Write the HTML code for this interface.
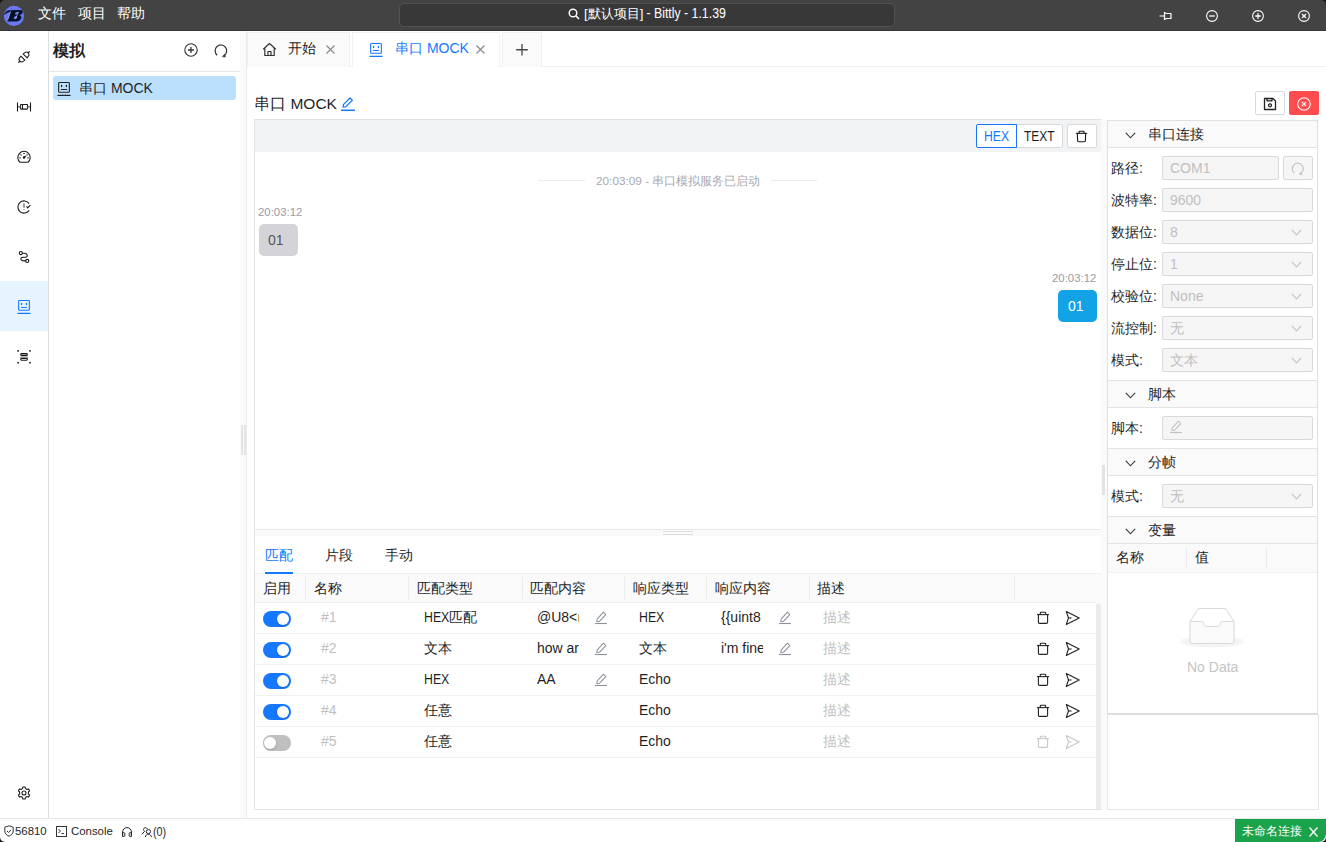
<!DOCTYPE html>
<html><head><meta charset="utf-8">
<style>
*{box-sizing:border-box;margin:0;padding:0}
html,body{width:1326px;height:842px;overflow:hidden;background:#fff;font-family:"Liberation Sans",sans-serif;color:#1f1f1f;font-size:14px}
.a{position:absolute;white-space:nowrap}
svg{position:absolute;overflow:visible}
/* title bar */
#tb{left:0;top:0;width:1326px;height:31px;background:#434343;border-bottom:1px solid #363636}
.menu{color:#fff;font-size:14px;top:5px}
#search{left:399px;top:3px;width:496px;height:24px;background:#383838;border:1px solid #525252;border-radius:5px}
/* icon bar */
#ib{left:0;top:31px;width:49px;height:787px;border-right:1px solid #dcdee3;background:#fff}
#ibact{left:0;top:281px;width:48px;height:50px;background:#e6f4ff}
/* sidebar */
#sb{left:49px;top:31px;width:191px;height:787px;background:#fff}
#split1{left:240px;top:31px;width:7px;height:787px;background:#fafafa;border-right:1px solid #ebebeb}
/* tabs */
.tab{top:32px;height:35px;background:#fafafa;border:1px solid #f0f0f0;border-bottom:none}
#tabline{left:247px;top:66px;width:1079px;height:1px;background:#f0f0f0}
/* main */
#box{left:254px;top:119px;width:848px;height:691px;border:1px solid #e1e2e6;border-right:none}
#chatbar{left:255px;top:120px;width:846px;height:32px;background:#f2f3f5}
#split2{left:1101px;top:119px;width:6px;height:691px;background:#fafafa}
#rp{left:1107px;top:119px;width:212px;height:596px;border:1px solid #e3e3e3;border-top:1px solid #e3e3e3}
.sech{left:1108px;width:209px;height:28px;background:#fafafa;border-bottom:1px solid #e6e6e6}
.lbl{left:1111px;font-size:14px;color:#1f1f1f}
.inp{left:1162px;width:151px;height:24px;background:#f5f5f5;border:1px solid #d9d9d9;border-radius:2px}
.ph{color:#bfbfbf;font-size:14px}
.sb{font-size:12px}
</style></head><body>

<!-- Title bar -->
<div class="a" id="tb"></div>
<svg style="left:0;top:0" width="30" height="30" viewBox="0 0 30 30"><circle cx="13.9" cy="15.9" r="10.1" fill="#6b78f5"/><path d="M4.2 14.4C3.9 12.2 6 10.4 9.2 10.2L19.8 10C22.6 10 23.5 11.4 22.3 13.3 21.6 14.4 20.4 15 19.3 15.3 21.1 15.8 21.9 17 21.1 18.8 20.1 20.8 17.6 21.6 14.6 21.6H7.3L10.3 12.1C8.4 12.2 7 12.9 6 14Z" fill="#06122c"/><path d="M15.6 12.2L17.8 12.1C18.6 12.2 18.3 13.6 17.2 14.3 16.6 14.7 15.5 14.6 15 14.6ZM14.5 16.3L16.6 16.3C17.5 16.5 17.1 18.3 15.8 18.9 15.2 19.2 14.2 19.1 13.6 19.1Z" fill="#6b78f5"/><path d="M10.7 11.2L7.9 19.6M5 13.5C4.9 12.6 5.4 11.8 6.5 11.3M18.6 11.8L15.6 18.6" stroke="#fff" stroke-width="0.55" fill="none" opacity="0.85"/></svg>
<div class="a menu" style="left:38px">文件</div>
<div class="a menu" style="left:78px">项目</div>
<div class="a menu" style="left:117px">帮助</div>
<div class="a" id="search"></div>
<svg style="left:568px;top:8px" width="12" height="12" viewBox="0 0 12 12"><circle cx="5" cy="5" r="3.8" fill="none" stroke="#fff" stroke-width="1.4"/><path d="M7.8 7.8L11 11" stroke="#fff" stroke-width="1.6"/></svg>
<div class="a" style="left:584px;top:5px;color:#fff;font-size:13.2px">[默认项目]<span style="display:inline-block;font-size:14px;transform:scaleX(0.88);transform-origin:0 50%">&nbsp;- Bittly - 1.1.39</span></div>


<!-- window buttons -->
<svg style="left:1159px;top:10px" width="13" height="12" viewBox="0 0 13 12"><path d="M0.5 6H5.5M5.5 2.5V9.5L7.5 8.5H12V3.5H7.5Z" fill="none" stroke="#fff" stroke-width="1.2" stroke-linejoin="round"/></svg>
<svg style="left:1206px;top:10px" width="12" height="12" viewBox="0 0 12 12"><circle cx="6" cy="6" r="5.4" fill="none" stroke="#fff" stroke-width="1.1"/><path d="M3.3 6H8.7" stroke="#fff" stroke-width="1.3"/></svg>
<svg style="left:1252px;top:10px" width="12" height="12" viewBox="0 0 12 12"><circle cx="6" cy="6" r="5.4" fill="none" stroke="#fff" stroke-width="1.1"/><path d="M3.3 6H8.7M6 3.3V8.7" stroke="#fff" stroke-width="1.3"/></svg>
<svg style="left:1298px;top:10px" width="12" height="12" viewBox="0 0 12 12"><circle cx="6" cy="6" r="5.4" fill="none" stroke="#fff" stroke-width="1.1"/><path d="M4 4L8 8M8 4L4 8" stroke="#fff" stroke-width="1.2"/></svg>

<!-- icon bar -->
<div class="a" id="ib"></div>
<div class="a" id="ibact"></div>
<svg style="left:17px;top:50px" width="14" height="14" viewBox="0 0 14 14" fill="none" stroke="#1a1a1a" stroke-width="1.05" stroke-linejoin="round"><g transform="translate(7 7) rotate(-45)"><path d="M1.6 -2.9V2.9L4.6 2.3C6.2 1.6 6.2 -1.6 4.6 -2.3Z"/><path d="M-1.6 -2.9V2.9L-4.6 2.3C-6.2 1.6 -6.2 -1.6 -4.6 -2.3Z"/><path d="M5.9 0H8M-5.9 0H-8" stroke-width="1.3"/></g></svg>
<svg style="left:17px;top:100px" width="14" height="14" viewBox="0 0 14 14" fill="none" stroke="#1a1a1a" stroke-width="1.1"><path d="M0.5 2.4V11.5M13.5 2.4V11.5"/><rect x="3.5" y="4.5" width="7" height="4.6" rx="0.6"/><path d="M5.5 4.5V9.1"/><path d="M1 6.8H3.5M10.5 6.8H13" stroke="#777" stroke-width="1.4"/></svg>
<svg style="left:17px;top:150px" width="14" height="14" viewBox="0 0 14 14" fill="none" stroke="#1a1a1a" stroke-width="1.1"><path d="M3.1 12.3A6.2 6.2 0 1 1 10.9 12.3Z" stroke-linejoin="round"/><path d="M7 7.5L8.8 5.9" stroke-width="1.2"/><circle cx="7" cy="7.6" r="0.7" fill="#1a1a1a"/><g stroke-width="1.2" stroke-linecap="round"><path d="M6.7 3.5H7.3M3.8 4.8L4.1 5M10.2 4.8L9.9 5M2.8 7.8H3.2M10.8 7.8H11.2"/></g></svg>
<svg style="left:17px;top:200px" width="14" height="14" viewBox="0 0 14 14" fill="none" stroke="#1a1a1a" stroke-width="1.1"><path d="M12.1 3.6A6.13 6.13 0 1 0 12.1 10.4"/><path d="M7 3.6V7.7M7 9.2V10.1" stroke-width="1.1" stroke="#444"/><path d="M9.5 6.3L10.7 7.9 13.4 5.2"/></svg>
<svg style="left:17px;top:250px" width="14" height="14" viewBox="0 0 14 14" fill="none" stroke="#1a1a1a" stroke-width="1.1"><circle cx="3.85" cy="3.1" r="1.55"/><circle cx="10.2" cy="10.9" r="1.55"/><path d="M5.4 3.3H7.4C9.6 3.4 10.6 5 10.1 6.3 9.8 7 9.1 7.3 8.5 7.3H5.8C4.2 7.3 3.6 8.4 4 9.5 4.4 10.5 5.6 10.9 7 10.9H8.6"/></svg>
<svg style="left:17px;top:299px" width="14" height="16" viewBox="0 0 14 16" fill="none" stroke="#1677ff" stroke-width="1.1"><rect x="1.65" y="1.55" width="10.7" height="9.7" rx="0.8"/><path d="M4.6 4.3V5.6M9.4 4.3V5.6" stroke-width="1.3" stroke-linecap="round"/><path d="M4.4 8.5H9.6" stroke-width="1.2" stroke-linecap="round"/><path d="M1 14.4H13" stroke-width="1.3" stroke-linecap="round"/></svg>
<svg style="left:17px;top:350px" width="14" height="14" viewBox="0 0 14 14" fill="none" stroke="#1a1a1a" stroke-width="1.1"><g fill="#1a1a1a" stroke="none"><rect x="0.3" y="0.1" width="1.6" height="1.6"/><rect x="12.2" y="0.1" width="1.6" height="1.6"/><rect x="0.3" y="11.9" width="1.6" height="1.6"/><rect x="12.2" y="11.9" width="1.6" height="1.6"/></g><rect x="3.2" y="5.8" width="7.7" height="2.1" fill="#bbb" stroke="none"/><rect x="3.7" y="3.6" width="6.7" height="1.8" rx="0.9"/><rect x="3.7" y="8.4" width="6.7" height="1.8" rx="0.9"/></svg>
<svg style="left:17px;top:786px" width="14" height="14" viewBox="0 0 14 14" fill="none" stroke="#222" stroke-width="1.1"><path d="M5.9 1H8.1L8.5 2.6 9.9 3.4 11.5 2.9 12.6 4.8 11.4 6V8L12.6 9.2 11.5 11.1 9.9 10.6 8.5 11.4 8.1 13H5.9L5.5 11.4 4.1 10.6 2.5 11.1 1.4 9.2 2.6 8V6L1.4 4.8 2.5 2.9 4.1 3.4 5.5 2.6Z" stroke-linejoin="round"/><circle cx="7" cy="7" r="2"/></svg>

<!-- sidebar -->
<div class="a" style="left:53px;top:41px;font-size:16px;font-weight:bold;color:#1f1f1f">模拟</div>
<svg style="left:184px;top:43px" width="14" height="14" viewBox="0 0 14 14" fill="none" stroke="#333" stroke-width="1.1"><circle cx="7" cy="7" r="6.2"/><path d="M4 7H10M7 4V10" stroke-width="1.3"/></svg>
<svg style="left:214px;top:44px" width="14" height="14" viewBox="0 0 14 14" fill="none" stroke="#333" stroke-width="1.2"><path d="M3.2 11.2A5.8 5.8 0 1 1 9.8 11.8"/><path d="M8.4 12.6L11.3 13 10.9 10.1Z" fill="#333" stroke-width="0.6" stroke-linejoin="round"/></svg>
<div class="a" style="left:49px;top:71px;width:191px;height:1px;background:#e6e6ea"></div>
<div class="a" style="left:53px;top:76px;width:183px;height:24px;background:#bae0fd;border-radius:3px"></div>
<svg style="left:57px;top:81px" width="14" height="16" viewBox="0 0 14 16" fill="none" stroke="#222" stroke-width="1.1"><rect x="1.65" y="1.55" width="10.7" height="9.7" rx="0.8"/><path d="M4.6 4.3V5.6M9.4 4.3V5.6" stroke-width="1.3" stroke-linecap="round"/><path d="M4.4 8.5H9.6" stroke-width="1.2" stroke-linecap="round"/><path d="M1 14.4H13" stroke-width="1.3" stroke-linecap="round"/></svg>
<div class="a" style="left:79px;top:80px;font-size:14px;color:#1f1f1f">串口 MOCK</div>
<div class="a" id="split1"></div>
<div class="a" style="left:241px;top:425px;width:2px;height:30px;background:#e3e3e3"></div>
<div class="a" style="left:244px;top:425px;width:2px;height:30px;background:#e3e3e3"></div>

<!-- tabs -->
<div class="a" id="tabline"></div>
<div class="a tab" style="left:247px;width:103px"></div>
<div class="a" style="left:352px;top:32px;width:148px;height:35px;background:#fff;border:1px solid #f0f0f0;border-bottom:none"></div>
<div class="a tab" style="left:502px;width:40px"></div>
<svg style="left:262px;top:42px" width="15" height="15" viewBox="0 0 15 15" fill="none" stroke="#333" stroke-width="1.2" stroke-linejoin="round"><path d="M1.2 7.2L7.5 1.5 13.8 7.2M2.8 5.8V13.5H12.2V5.8M6 13.5V9.5H9V13.5"/></svg>
<div class="a" style="left:288px;top:40px;font-size:14px;color:#1f1f1f">开始</div>
<svg style="left:326px;top:45px" width="9" height="9" viewBox="0 0 9 9" stroke="#888" stroke-width="1.1"><path d="M0.5 0.5L8.5 8.5M8.5 0.5L0.5 8.5"/></svg>
<svg style="left:369px;top:42px" width="14" height="16" viewBox="0 0 14 16" fill="none" stroke="#1677ff" stroke-width="1.1"><rect x="1.65" y="1.55" width="10.7" height="9.7" rx="0.8"/><path d="M4.6 4.3V5.6M9.4 4.3V5.6" stroke-width="1.3" stroke-linecap="round"/><path d="M4.4 8.5H9.6" stroke-width="1.2" stroke-linecap="round"/><path d="M1 14.4H13" stroke-width="1.3" stroke-linecap="round"/></svg>
<div class="a" style="left:395px;top:40px;font-size:14px;color:#1677ff">串口 MOCK</div>
<svg style="left:476px;top:45px" width="9" height="9" viewBox="0 0 9 9" stroke="#888" stroke-width="1.1"><path d="M0.5 0.5L8.5 8.5M8.5 0.5L0.5 8.5"/></svg>
<svg style="left:515px;top:43px" width="14" height="14" viewBox="0 0 14 14" stroke="#444" stroke-width="1.3"><path d="M7 1V12.5M1.2 6.75H12.8"/></svg>


<!-- title row -->
<div class="a" style="left:254px;top:94px;font-size:16px;color:#1f1f1f">串口 <span style="font-size:15.5px">MOCK</span></div>
<svg style="left:340px;top:96px" width="16" height="16" viewBox="0 0 16 16" fill="none" stroke="#1677ff" stroke-width="1.3" stroke-linejoin="round"><path d="M3.2 11.2L3.4 8.6 10 2 12.3 4.3 5.7 10.9Z"/><path d="M1 14.3H15" stroke-width="1.5"/></svg>
<div class="a" style="left:1255px;top:91px;width:30px;height:24px;border:1px solid #d9d9d9;border-radius:2px;background:#fff;box-shadow:0 2px 0 rgba(0,0,0,0.02)"></div>
<svg style="left:1263px;top:97px" width="14" height="14" viewBox="0 0 14 14" fill="none" stroke="#222" stroke-width="1.3" stroke-linejoin="round"><path d="M1.5 1.5H10L12.5 4V12.5H1.5Z"/><path d="M4 1.5V3.8H9V1.5"/><circle cx="7" cy="8.3" r="1.5"/></svg>
<div class="a" style="left:1289px;top:91px;width:30px;height:24px;border-radius:2px;background:#ff4d4f"></div>
<svg style="left:1297px;top:97px" width="14" height="14" viewBox="0 0 14 14" fill="none" stroke="#fff" stroke-width="1.1"><circle cx="7" cy="7" r="6.3"/><path d="M4.8 4.8L9.2 9.2M9.2 4.8L4.8 9.2" stroke-width="1.2"/></svg>

<!-- chat box -->
<div class="a" id="box"></div>
<div class="a" id="chatbar"></div>
<div class="a" style="left:976px;top:124px;width:87px;height:24px;border:1px solid #d9d9d9;border-radius:2px;background:#fff"></div>
<div class="a" style="left:976px;top:124px;width:41px;height:24px;border:1px solid #1677ff;border-radius:2px 0 0 2px;background:#fff"></div>
<div class="a" style="left:984px;top:128px;font-size:14px;color:#1677ff;transform:scaleX(0.87);transform-origin:0 0">HEX</div>
<div class="a" style="left:1024px;top:128px;font-size:14px;color:#1f1f1f;transform:scaleX(0.85);transform-origin:0 0">TEXT</div>
<div class="a" style="left:1067px;top:124px;width:30px;height:24px;border:1px solid #d9d9d9;border-radius:2px;background:#fff"></div>
<svg style="left:1075px;top:130px" width="13" height="13" viewBox="0 0 14 14" fill="none" stroke="#1a1a1a" stroke-width="1.2" stroke-linejoin="round"><path d="M1 3.6H13"/><path d="M4.3 3.6V2C4.3 1.6 4.6 1.3 5 1.3H9C9.4 1.3 9.7 1.6 9.7 2V3.6"/><path d="M2.5 3.6L2.8 11.3C2.8 12 3.2 12.6 3.9 12.6H10.1C10.8 12.6 11.2 12 11.2 11.3L11.5 3.6"/></svg>

<div class="a" style="left:538px;top:180px;width:47px;height:1px;background:#ebebeb"></div>
<div class="a" style="left:771px;top:180px;width:46px;height:1px;background:#ebebeb"></div>
<div class="a" style="left:596px;top:174px;font-size:11.8px;color:#a8a8b0">20:03:09 - 串口模拟服务已启动</div>
<div class="a" style="left:258px;top:206px;font-size:11.4px;color:#9a9aa6">20:03:12</div>
<div class="a" style="left:259px;top:224px;width:39px;height:32px;border-radius:5px;background:#d4d4d8"></div>
<div class="a" style="left:268px;top:232px;font-size:14px;color:#555">01</div>
<div class="a" style="left:1052px;top:272px;font-size:11.4px;color:#9a9aa6">20:03:12</div>
<div class="a" style="left:1058px;top:290px;width:39px;height:32px;border-radius:5px;background:#12a3e6"></div>
<div class="a" style="left:1068px;top:298px;font-size:14px;color:#fff">01</div>

<!-- splitter between chat and bottom -->
<div class="a" style="left:255px;top:529px;width:846px;height:1px;background:#e6e6ea"></div>
<div class="a" style="left:255px;top:530px;width:846px;height:6px;background:#fafafa"></div>
<div class="a" style="left:663px;top:531px;width:30px;height:1px;background:#dcdcdc"></div>
<div class="a" style="left:663px;top:534px;width:30px;height:1px;background:#dcdcdc"></div>

<!-- bottom tabs -->
<div class="a" style="left:265px;top:547px;font-size:14px;color:#1677ff">匹配</div>
<div class="a" style="left:325px;top:547px;font-size:14px;color:#1f1f1f">片段</div>
<div class="a" style="left:385px;top:547px;font-size:14px;color:#1f1f1f">手动</div>
<div class="a" style="left:255px;top:573px;width:846px;height:1px;background:#f0f0f0"></div>
<div class="a" style="left:265px;top:572px;width:28px;height:2px;background:#1677ff"></div>

<div class="a" style="left:255px;top:574px;width:841px;height:29px;background:#fafafa;border-bottom:1px solid #f0f0f0"></div>
<div class="a" style="left:1096px;top:574px;width:5px;height:29px;background:#fafafa"></div>
<div class="a" style="left:305px;top:577px;width:1px;height:22px;background:#ececec"></div>
<div class="a" style="left:408px;top:577px;width:1px;height:22px;background:#ececec"></div>
<div class="a" style="left:522px;top:577px;width:1px;height:22px;background:#ececec"></div>
<div class="a" style="left:624px;top:577px;width:1px;height:22px;background:#ececec"></div>
<div class="a" style="left:706px;top:577px;width:1px;height:22px;background:#ececec"></div>
<div class="a" style="left:809px;top:577px;width:1px;height:22px;background:#ececec"></div>
<div class="a" style="left:1014px;top:577px;width:1px;height:22px;background:#ececec"></div>
<div class="a" style="left:263px;top:580px;font-size:14px;color:#1f1f1f">启用</div>
<div class="a" style="left:314px;top:580px;font-size:14px;color:#1f1f1f">名称</div>
<div class="a" style="left:417px;top:580px;font-size:14px;color:#1f1f1f">匹配类型</div>
<div class="a" style="left:530px;top:580px;font-size:14px;color:#1f1f1f">匹配内容</div>
<div class="a" style="left:633px;top:580px;font-size:14px;color:#1f1f1f">响应类型</div>
<div class="a" style="left:715px;top:580px;font-size:14px;color:#1f1f1f">响应内容</div>
<div class="a" style="left:817px;top:580px;font-size:14px;color:#1f1f1f">描述</div>
<div class="a" style="left:255px;top:633px;width:841px;height:1px;background:#f0f0f0"></div>
<div class="a" style="left:263px;top:611px;width:28px;height:16px;border-radius:8px;background:#1677ff"></div>
<div class="a" style="left:277px;top:613px;width:12px;height:12px;border-radius:6px;background:#fff;box-shadow:0 1px 2px rgba(0,35,11,0.2)"></div>
<div class="a" style="left:321px;top:609px;font-size:14px;color:#bfbfbf">#1</div>
<div class="a" style="left:424px;top:609px;font-size:14px;color:#1f1f1f"><span style="display:inline-block;width:25px;transform:scaleX(0.88);transform-origin:0 0">HEX</span>匹配</div>
<div class="a" style="left:537px;top:609px;width:42px;overflow:hidden;font-size:14px;color:#1f1f1f">@U8&lt;ı</div>
<svg style="left:590px;top:606px" width="24" height="24" viewBox="0 0 24 24" fill="none" stroke="#8c919c" stroke-width="1.05" stroke-linejoin="round"><path d="M6.8 15.6L7.3 12.8 13.4 6.2 15.8 8.6 9.6 15.2Z"/><path d="M5 17.5H17" stroke-width="1.1"/></svg>
<div class="a" style="left:639px;top:609px;font-size:14px;color:#1f1f1f;transform:scaleX(0.88);transform-origin:0 0">HEX</div>
<div class="a" style="left:721px;top:609px;width:42px;overflow:hidden;font-size:14px;color:#1f1f1f">{{uint8</div>
<svg style="left:774px;top:606px" width="24" height="24" viewBox="0 0 24 24" fill="none" stroke="#8c919c" stroke-width="1.05" stroke-linejoin="round"><path d="M6.8 15.6L7.3 12.8 13.4 6.2 15.8 8.6 9.6 15.2Z"/><path d="M5 17.5H17" stroke-width="1.1"/></svg>
<div class="a" style="left:823px;top:609px;font-size:14px;color:#bfbfbf">描述</div>
<svg style="left:1036px;top:611px" width="14" height="14" viewBox="0 0 14 14" fill="none" stroke="#222" stroke-width="1.1" stroke-linejoin="round"><path d="M1 3.6H13"/><path d="M4.3 3.6V2C4.3 1.6 4.6 1.3 5 1.3H9C9.4 1.3 9.7 1.6 9.7 2V3.6"/><path d="M2.4 3.6V11.3C2.4 12 2.9 12.4 3.5 12.4H10.5C11.1 12.4 11.6 12 11.6 11.3V3.6"/></svg>
<svg style="left:1065px;top:611px" width="15" height="14" viewBox="0 0 15 14" fill="none" stroke="#222" stroke-width="1.1" stroke-linejoin="round"><path d="M1.3 0.6L14.2 7 1.3 13.4 3.5 7Z"/><path d="M3.5 7H6.5"/></svg>
<div class="a" style="left:255px;top:664px;width:841px;height:1px;background:#f0f0f0"></div>
<div class="a" style="left:263px;top:642px;width:28px;height:16px;border-radius:8px;background:#1677ff"></div>
<div class="a" style="left:277px;top:644px;width:12px;height:12px;border-radius:6px;background:#fff;box-shadow:0 1px 2px rgba(0,35,11,0.2)"></div>
<div class="a" style="left:321px;top:640px;font-size:14px;color:#bfbfbf">#2</div>
<div class="a" style="left:424px;top:640px;font-size:14px;color:#1f1f1f">文本</div>
<div class="a" style="left:537px;top:640px;width:42px;overflow:hidden;font-size:14px;color:#1f1f1f">how ar</div>
<svg style="left:590px;top:637px" width="24" height="24" viewBox="0 0 24 24" fill="none" stroke="#8c919c" stroke-width="1.05" stroke-linejoin="round"><path d="M6.8 15.6L7.3 12.8 13.4 6.2 15.8 8.6 9.6 15.2Z"/><path d="M5 17.5H17" stroke-width="1.1"/></svg>
<div class="a" style="left:639px;top:640px;font-size:14px;color:#1f1f1f">文本</div>
<div class="a" style="left:721px;top:640px;width:42px;overflow:hidden;font-size:14px;color:#1f1f1f">i'm fine</div>
<svg style="left:774px;top:637px" width="24" height="24" viewBox="0 0 24 24" fill="none" stroke="#8c919c" stroke-width="1.05" stroke-linejoin="round"><path d="M6.8 15.6L7.3 12.8 13.4 6.2 15.8 8.6 9.6 15.2Z"/><path d="M5 17.5H17" stroke-width="1.1"/></svg>
<div class="a" style="left:823px;top:640px;font-size:14px;color:#bfbfbf">描述</div>
<svg style="left:1036px;top:642px" width="14" height="14" viewBox="0 0 14 14" fill="none" stroke="#222" stroke-width="1.1" stroke-linejoin="round"><path d="M1 3.6H13"/><path d="M4.3 3.6V2C4.3 1.6 4.6 1.3 5 1.3H9C9.4 1.3 9.7 1.6 9.7 2V3.6"/><path d="M2.4 3.6V11.3C2.4 12 2.9 12.4 3.5 12.4H10.5C11.1 12.4 11.6 12 11.6 11.3V3.6"/></svg>
<svg style="left:1065px;top:642px" width="15" height="14" viewBox="0 0 15 14" fill="none" stroke="#222" stroke-width="1.1" stroke-linejoin="round"><path d="M1.3 0.6L14.2 7 1.3 13.4 3.5 7Z"/><path d="M3.5 7H6.5"/></svg>
<div class="a" style="left:255px;top:695px;width:841px;height:1px;background:#f0f0f0"></div>
<div class="a" style="left:263px;top:673px;width:28px;height:16px;border-radius:8px;background:#1677ff"></div>
<div class="a" style="left:277px;top:675px;width:12px;height:12px;border-radius:6px;background:#fff;box-shadow:0 1px 2px rgba(0,35,11,0.2)"></div>
<div class="a" style="left:321px;top:671px;font-size:14px;color:#bfbfbf">#3</div>
<div class="a" style="left:424px;top:671px;font-size:14px;color:#1f1f1f;transform:scaleX(0.88);transform-origin:0 0">HEX</div>
<div class="a" style="left:537px;top:671px;width:42px;overflow:hidden;font-size:14px;color:#1f1f1f">AA</div>
<svg style="left:590px;top:668px" width="24" height="24" viewBox="0 0 24 24" fill="none" stroke="#8c919c" stroke-width="1.05" stroke-linejoin="round"><path d="M6.8 15.6L7.3 12.8 13.4 6.2 15.8 8.6 9.6 15.2Z"/><path d="M5 17.5H17" stroke-width="1.1"/></svg>
<div class="a" style="left:639px;top:671px;font-size:14px;color:#1f1f1f">Echo</div>
<div class="a" style="left:823px;top:671px;font-size:14px;color:#bfbfbf">描述</div>
<svg style="left:1036px;top:673px" width="14" height="14" viewBox="0 0 14 14" fill="none" stroke="#222" stroke-width="1.1" stroke-linejoin="round"><path d="M1 3.6H13"/><path d="M4.3 3.6V2C4.3 1.6 4.6 1.3 5 1.3H9C9.4 1.3 9.7 1.6 9.7 2V3.6"/><path d="M2.4 3.6V11.3C2.4 12 2.9 12.4 3.5 12.4H10.5C11.1 12.4 11.6 12 11.6 11.3V3.6"/></svg>
<svg style="left:1065px;top:673px" width="15" height="14" viewBox="0 0 15 14" fill="none" stroke="#222" stroke-width="1.1" stroke-linejoin="round"><path d="M1.3 0.6L14.2 7 1.3 13.4 3.5 7Z"/><path d="M3.5 7H6.5"/></svg>
<div class="a" style="left:255px;top:726px;width:841px;height:1px;background:#f0f0f0"></div>
<div class="a" style="left:263px;top:704px;width:28px;height:16px;border-radius:8px;background:#1677ff"></div>
<div class="a" style="left:277px;top:706px;width:12px;height:12px;border-radius:6px;background:#fff;box-shadow:0 1px 2px rgba(0,35,11,0.2)"></div>
<div class="a" style="left:321px;top:702px;font-size:14px;color:#bfbfbf">#4</div>
<div class="a" style="left:424px;top:702px;font-size:14px;color:#1f1f1f">任意</div>
<div class="a" style="left:639px;top:702px;font-size:14px;color:#1f1f1f">Echo</div>
<div class="a" style="left:823px;top:702px;font-size:14px;color:#bfbfbf">描述</div>
<svg style="left:1036px;top:704px" width="14" height="14" viewBox="0 0 14 14" fill="none" stroke="#222" stroke-width="1.1" stroke-linejoin="round"><path d="M1 3.6H13"/><path d="M4.3 3.6V2C4.3 1.6 4.6 1.3 5 1.3H9C9.4 1.3 9.7 1.6 9.7 2V3.6"/><path d="M2.4 3.6V11.3C2.4 12 2.9 12.4 3.5 12.4H10.5C11.1 12.4 11.6 12 11.6 11.3V3.6"/></svg>
<svg style="left:1065px;top:704px" width="15" height="14" viewBox="0 0 15 14" fill="none" stroke="#222" stroke-width="1.1" stroke-linejoin="round"><path d="M1.3 0.6L14.2 7 1.3 13.4 3.5 7Z"/><path d="M3.5 7H6.5"/></svg>
<div class="a" style="left:255px;top:757px;width:841px;height:1px;background:#f0f0f0"></div>
<div class="a" style="left:263px;top:735px;width:28px;height:16px;border-radius:8px;background:#bfbfbf"></div>
<div class="a" style="left:264px;top:737px;width:12px;height:12px;border-radius:6px;background:#fff;box-shadow:0 1px 2px rgba(0,35,11,0.2)"></div>
<div class="a" style="left:321px;top:733px;font-size:14px;color:#bfbfbf">#5</div>
<div class="a" style="left:424px;top:733px;font-size:14px;color:#1f1f1f">任意</div>
<div class="a" style="left:639px;top:733px;font-size:14px;color:#1f1f1f">Echo</div>
<div class="a" style="left:823px;top:733px;font-size:14px;color:#bfbfbf">描述</div>
<svg style="left:1036px;top:735px" width="14" height="14" viewBox="0 0 14 14" fill="none" stroke="#c8c8c8" stroke-width="1.1" stroke-linejoin="round"><path d="M1 3.6H13"/><path d="M4.3 3.6V2C4.3 1.6 4.6 1.3 5 1.3H9C9.4 1.3 9.7 1.6 9.7 2V3.6"/><path d="M2.4 3.6V11.3C2.4 12 2.9 12.4 3.5 12.4H10.5C11.1 12.4 11.6 12 11.6 11.3V3.6"/></svg>
<svg style="left:1065px;top:735px" width="15" height="14" viewBox="0 0 15 14" fill="none" stroke="#c8c8c8" stroke-width="1.1" stroke-linejoin="round"><path d="M1.3 0.6L14.2 7 1.3 13.4 3.5 7Z"/><path d="M3.5 7H6.5"/></svg>
<div class="a" style="left:1096px;top:603px;width:5px;height:206px;background:#ebebeb;border-radius:3px 3px 0 0"></div>
<div class="a" id="split2"></div>
<div class="a" style="left:1102px;top:465px;width:3px;height:30px;background:#e3e3e3"></div>
<div class="a" style="left:1107px;top:120px;width:211px;height:595px;border:1px solid #e0e0e0;background:#fff"></div>
<div class="a sech" style="top:121px;height:27px"></div>
<div class="a" style="left:1108px;top:147px;width:209px;height:1px;background:#e3e3e3"></div>
<svg style="left:1125px;top:132px" width="11" height="7" viewBox="0 0 11 7" fill="none" stroke="#333" stroke-width="1.1"><path d="M0.8 0.8L5.5 5.8 10.2 0.8"/></svg>
<div class="a" style="left:1148px;top:126px;font-size:14px;color:#1f1f1f">串口连接</div>
<div class="a sech" style="top:381px;height:27px"></div>
<div class="a" style="left:1108px;top:407px;width:209px;height:1px;background:#e3e3e3"></div>
<svg style="left:1125px;top:392px" width="11" height="7" viewBox="0 0 11 7" fill="none" stroke="#333" stroke-width="1.1"><path d="M0.8 0.8L5.5 5.8 10.2 0.8"/></svg>
<div class="a" style="left:1148px;top:386px;font-size:14px;color:#1f1f1f">脚本</div>
<div class="a sech" style="top:449px;height:27px"></div>
<div class="a" style="left:1108px;top:475px;width:209px;height:1px;background:#e3e3e3"></div>
<svg style="left:1125px;top:460px" width="11" height="7" viewBox="0 0 11 7" fill="none" stroke="#333" stroke-width="1.1"><path d="M0.8 0.8L5.5 5.8 10.2 0.8"/></svg>
<div class="a" style="left:1148px;top:454px;font-size:14px;color:#1f1f1f">分帧</div>
<div class="a sech" style="top:517px;height:27px"></div>
<div class="a" style="left:1108px;top:543px;width:209px;height:1px;background:#e3e3e3"></div>
<svg style="left:1125px;top:528px" width="11" height="7" viewBox="0 0 11 7" fill="none" stroke="#333" stroke-width="1.1"><path d="M0.8 0.8L5.5 5.8 10.2 0.8"/></svg>
<div class="a" style="left:1148px;top:522px;font-size:14px;color:#1f1f1f">变量</div>
<div class="a" style="left:1108px;top:380px;width:209px;height:1px;background:#e3e3e3"></div>
<div class="a" style="left:1108px;top:448px;width:209px;height:1px;background:#e3e3e3"></div>
<div class="a" style="left:1108px;top:516px;width:209px;height:1px;background:#e3e3e3"></div>
<div class="a" style="left:1111px;top:160px;font-size:14px;color:#1f1f1f">路径:</div>
<div class="a inp" style="top:156px;width:117px"></div>
<div class="a" style="left:1170px;top:160px;font-size:14px;color:#bfbfbf">COM1</div>
<div class="a inp" style="left:1283px;top:156px;width:30px"></div>
<svg style="left:1291px;top:162px" width="14" height="14" viewBox="0 0 14 14" fill="none" stroke="#bfbfbf" stroke-width="1.1"><path d="M3.3 11A5.47 5.47 0 1 1 9.5 11.5"/><path d="M8.2 12.3L10.9 12.7 10.5 10Z" fill="#bfbfbf" stroke-width="0.6" stroke-linejoin="round"/></svg>
<div class="a" style="left:1111px;top:192px;font-size:14px;color:#1f1f1f">波特率:</div>
<div class="a inp" style="top:188px;width:151px"></div>
<div class="a" style="left:1170px;top:192px;font-size:14px;color:#bfbfbf">9600</div>
<div class="a" style="left:1111px;top:224px;font-size:14px;color:#1f1f1f">数据位:</div>
<div class="a inp" style="top:220px;width:151px"></div>
<div class="a" style="left:1170px;top:224px;font-size:14px;color:#bfbfbf">8</div>
<svg style="left:1291px;top:229px" width="11" height="7" viewBox="0 0 11 7" fill="none" stroke="#bfbfbf" stroke-width="1.1"><path d="M0.8 0.8L5.5 5.8 10.2 0.8"/></svg>
<div class="a" style="left:1111px;top:256px;font-size:14px;color:#1f1f1f">停止位:</div>
<div class="a inp" style="top:252px;width:151px"></div>
<div class="a" style="left:1170px;top:256px;font-size:14px;color:#bfbfbf">1</div>
<svg style="left:1291px;top:261px" width="11" height="7" viewBox="0 0 11 7" fill="none" stroke="#bfbfbf" stroke-width="1.1"><path d="M0.8 0.8L5.5 5.8 10.2 0.8"/></svg>
<div class="a" style="left:1111px;top:288px;font-size:14px;color:#1f1f1f">校验位:</div>
<div class="a inp" style="top:284px;width:151px"></div>
<div class="a" style="left:1170px;top:288px;font-size:14px;color:#bfbfbf">None</div>
<svg style="left:1291px;top:293px" width="11" height="7" viewBox="0 0 11 7" fill="none" stroke="#bfbfbf" stroke-width="1.1"><path d="M0.8 0.8L5.5 5.8 10.2 0.8"/></svg>
<div class="a" style="left:1111px;top:320px;font-size:14px;color:#1f1f1f">流控制:</div>
<div class="a inp" style="top:316px;width:151px"></div>
<div class="a" style="left:1170px;top:320px;font-size:14px;color:#bfbfbf">无</div>
<svg style="left:1291px;top:325px" width="11" height="7" viewBox="0 0 11 7" fill="none" stroke="#bfbfbf" stroke-width="1.1"><path d="M0.8 0.8L5.5 5.8 10.2 0.8"/></svg>
<div class="a" style="left:1111px;top:352px;font-size:14px;color:#1f1f1f">模式:</div>
<div class="a inp" style="top:348px;width:151px"></div>
<div class="a" style="left:1170px;top:352px;font-size:14px;color:#bfbfbf">文本</div>
<svg style="left:1291px;top:357px" width="11" height="7" viewBox="0 0 11 7" fill="none" stroke="#bfbfbf" stroke-width="1.1"><path d="M0.8 0.8L5.5 5.8 10.2 0.8"/></svg>
<div class="a" style="left:1111px;top:420px;font-size:14px;color:#1f1f1f">脚本:</div>
<div class="a inp" style="top:416px;width:151px"></div>
<svg style="left:1165px;top:415px" width="24" height="24" viewBox="0 0 24 24" fill="none" stroke="#bfbfbf" stroke-width="1.05" stroke-linejoin="round"><path d="M6.8 15.6L7.3 12.8 13.4 6.2 15.8 8.6 9.6 15.2Z"/><path d="M5 17.5H17" stroke-width="1.1"/></svg>
<div class="a" style="left:1111px;top:488px;font-size:14px;color:#1f1f1f">模式:</div>
<div class="a inp" style="top:484px;width:151px"></div>
<div class="a" style="left:1170px;top:488px;font-size:14px;color:#bfbfbf">无</div>
<svg style="left:1291px;top:493px" width="11" height="7" viewBox="0 0 11 7" fill="none" stroke="#bfbfbf" stroke-width="1.1"><path d="M0.8 0.8L5.5 5.8 10.2 0.8"/></svg>
<div class="a" style="left:1108px;top:544px;width:209px;height:29px;background:#fafafa;border-bottom:1px solid #f0f0f0"></div>
<div class="a" style="left:1186px;top:547px;width:1px;height:21px;background:#ececec"></div>
<div class="a" style="left:1266px;top:547px;width:1px;height:21px;background:#ececec"></div>
<div class="a" style="left:1116px;top:549px;font-size:14px;color:#1f1f1f">名称</div>
<div class="a" style="left:1195px;top:549px;font-size:14px;color:#1f1f1f">值</div>
<svg style="left:1180px;top:607px" width="64" height="41" viewBox="0 0 64 41"><ellipse cx="32" cy="34.5" rx="32" ry="6" fill="#f5f5f5"/><path d="M10 14.5L18.5 1.5H45.5L54 14.5" fill="none" stroke="#d9d9d9" stroke-width="1"/><path d="M10 14.5H22C23.5 14.5 24 15.5 24 17 24 18.5 25 19.5 27 19.5H37C39 19.5 40 18.5 40 17 40 15.5 40.5 14.5 42 14.5H54V34C54 35.5 53 36.5 51.5 36.5H12.5C11 36.5 10 35.5 10 34Z" fill="#fafafa" stroke="#d9d9d9" stroke-width="1"/></svg>
<div class="a" style="left:1187px;top:659px;font-size:14px;color:#c4c4c4">No Data</div>
<div class="a" style="left:1107px;top:714px;width:212px;height:96px;border:1px solid #e6e6ea;border-top:none"></div>
<div class="a" style="left:1108px;top:713px;width:209px;height:1px;background:#d9d9d9"></div>
<div class="a" style="left:0;top:818px;width:1326px;height:1px;background:#e6e6ea"></div>
<svg style="left:4px;top:825px" width="10" height="12" viewBox="0 0 10 12" fill="none" stroke="#333" stroke-width="1"><path d="M5 0.8L9.2 2.2V6C9.2 8.6 7.3 10.4 5 11.2 2.7 10.4 0.8 8.6 0.8 6V2.2Z"/><path d="M3 6L4.5 7.5 7 4.8"/></svg>
<div class="a" style="left:15px;top:825px;font-size:11.4px;color:#1f1f1f">56810</div>
<svg style="left:56px;top:826px" width="11" height="11" viewBox="0 0 11 11" fill="none" stroke="#333" stroke-width="1"><rect x="0.5" y="0.5" width="10" height="10"/><path d="M2.5 3L4.5 5 2.5 7M5.5 7.5H8"/></svg>
<div class="a" style="left:71px;top:825px;font-size:11.4px;color:#1f1f1f">Console</div>
<svg style="left:122px;top:827px" width="10" height="10" viewBox="0 0 10 10" fill="none" stroke="#222" stroke-width="1"><path d="M0.6 9.2V5A4.4 4.4 0 0 1 9.4 5V9.2"/><path d="M0.6 5.6H1.8C2.4 5.6 2.8 6 2.8 6.6V8.6C2.8 9.1 2.4 9.5 1.8 9.5H0.6Z"/><path d="M9.4 5.6H8.2C7.6 5.6 7.2 6 7.2 6.6V8.6C7.2 9.1 7.6 9.5 8.2 9.5H9.4Z"/></svg>
<svg style="left:141px;top:826px" width="12" height="12" viewBox="0 0 12 12" fill="none" stroke="#222" stroke-width="1"><circle cx="7.4" cy="5.6" r="2.1"/><path d="M4.3 11C4.8 9.3 5.9 8.2 7.4 8.2 8.9 8.2 10 9.3 10.5 11"/><path d="M6.4 2.9C6 2.2 5.3 1.7 4.4 1.7 3.2 1.7 2.5 2.6 2.5 3.5 2.5 4.3 3 4.9 3.6 5.3L0.9 8.3"/></svg>
<div class="a" style="left:153px;top:825px;font-size:12px;color:#1f1f1f;transform:scaleX(0.9);transform-origin:0 0">(0)</div>
<div class="a" style="left:1235px;top:819px;width:91px;height:23px;background:#1aa34a;border-radius:0 0 8px 0"></div>
<div class="a" style="left:1242px;top:823px;font-size:12px;color:#fff">未命名连接</div>
<svg style="left:1309px;top:827px" width="9" height="10" viewBox="0 0 9 10" stroke="#fff" stroke-width="1.25"><path d="M0.5 0.5L8.5 9.5M8.5 0.5L0.5 9.5"/></svg>
<div class="a" style="left:0;top:0;width:1326px;height:842px;border-radius:5px;box-shadow:0 0 0 12px #161618;pointer-events:none"></div>
</body></html>
